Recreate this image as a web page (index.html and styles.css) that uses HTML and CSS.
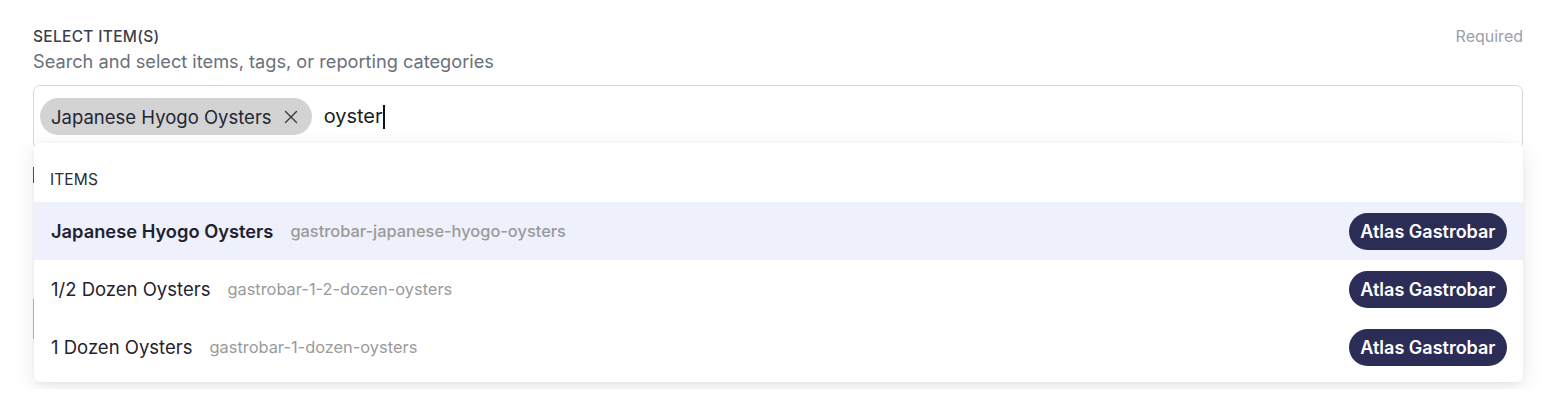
FILE: index.html
```html
<!DOCTYPE html>
<html>
<head>
<meta charset="utf-8">
<link rel="stylesheet" href="styles.css">
</head>
<body>
<div class="field">
  <div class="head">
    <div class="label">SELECT ITEM(S)</div>
    <div class="req">Required</div>
  </div>
  <div class="desc">Search and select items, tags, or reporting categories</div>
  <div class="combo">
    <div class="input">
      <span class="chip">Japanese Hyogo Oysters
        <svg class="x" width="14" height="14" viewBox="0 0 14 14"><path d="M1.5 1.5L12.5 12.5M12.5 1.5L1.5 12.5" stroke="#3a3a3a" stroke-width="1.4" stroke-linecap="round"/></svg>
      </span>
      <span class="query">oyster<span class="caret"></span></span>
    </div>
    <div class="below">
      <div class="ghost g1"></div>
      <div class="ghost g2"></div>
    </div>
    <div class="menu">
      <div class="group">ITEMS</div>
      <div class="row active"><span class="name">Japanese Hyogo Oysters</span><span class="slug">gastrobar-japanese-hyogo-oysters</span><span class="badge">Atlas Gastrobar</span></div>
      <div class="row"><span class="name">1/2 Dozen Oysters</span><span class="slug">gastrobar-1-2-dozen-oysters</span><span class="badge">Atlas Gastrobar</span></div>
      <div class="row"><span class="name">1 Dozen Oysters</span><span class="slug">gastrobar-1-dozen-oysters</span><span class="badge">Atlas Gastrobar</span></div>
    </div>
  </div>
</div>
</body>
</html>
```
FILE: styles.css
```css
* { box-sizing: border-box; }
html, body { margin: 0; background: #fff; }
body { font-family: Inter, "Noto Sans", sans-serif; color: #1f2230; }
.field { padding: 26px 29px 0 33px; }
.head { display: flex; justify-content: space-between; align-items: center; height: 20px; }
.label { font-size: 15.5px; font-weight: 500; color: #3b3f4a; letter-spacing: 0.3px; }
.req { font-size: 16px; color: #9ca0ab; }
.desc { font-size: 18.2px; color: #6b6f7b; margin-top: 4px; line-height: 22px; }
.combo { position: relative; margin-top: 13px; }
.input { border: 1px solid #d6d7db; border-radius: 7px; height: 64px; padding: 12px 6px; display: flex; align-items: flex-start; gap: 12px; }
.chip { display: inline-flex; align-items: center; gap: 9px; height: 37px; padding: 0 14px 0 11px; background: #d3d3d3; border-radius: 19px; font-size: 18.5px; color: #222633; }
.x { margin-left: 3px; }
.query { font-size: 20px; line-height: 37px; color: #1c1c1c; display: inline-flex; align-items: center; }
.caret { display: inline-block; width: 2px; height: 24px; background: #111; margin-left: 0; }
.below { height: 240px; position: relative; }
.ghost { position: absolute; left: 0; width: 3px; background: #555; }
.g1 { top: 18px; height: 16px; }
.g2 { top: 150px; height: 40px; background: #bbb; }
.menu { position: absolute; left: 1px; right: 0; top: 58px; background: #fff; border-radius: 6px; box-shadow: 0 6px 22px rgba(0,0,0,0.09), 0 1px 4px rgba(0,0,0,0.05); padding-bottom: 6px; }
.group { height: 59px; display: flex; align-items: center; padding: 14px 16px 0; font-size: 15.5px; color: #2a2d36; letter-spacing: 0.1px; }
.row { height: 58px; display: flex; align-items: center; padding: 0 16px 0 17px; font-size: 18.5px; color: #1f2230; }
.row.active { background: #eef0fb; }
.row.active .name { font-weight: 600; font-size: 18.3px; }
.slug { margin-left: 17px; font-size: 16.4px; color: #9a9a9a; }
.row.active .slug { font-weight: 500; }
.badge { margin-left: auto; height: 37px; display: inline-flex; align-items: center; padding: 0 11.5px; background: #2c2d57; color: #fff; border-radius: 19px; font-size: 18px; font-weight: 600; }
```
